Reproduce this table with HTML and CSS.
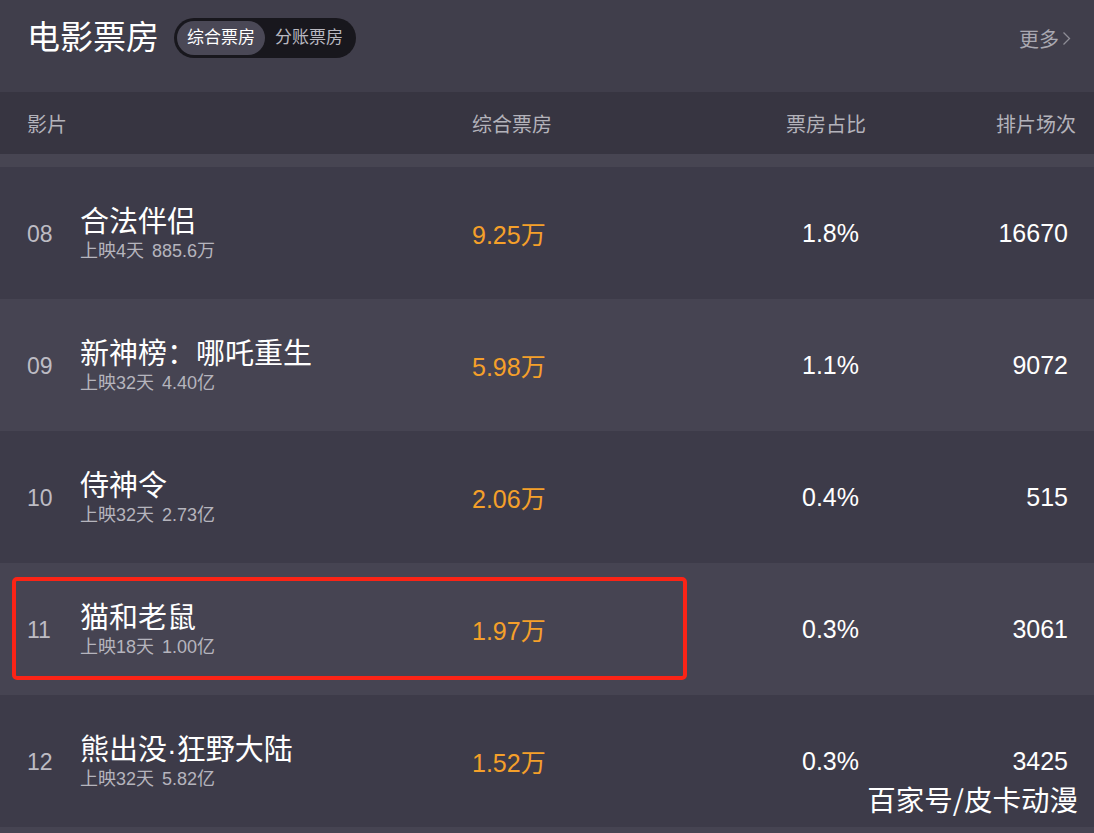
FILE: index.html
```html
<!DOCTYPE html>
<html lang="zh-CN">
<head>
<meta charset="utf-8">
<title>电影票房</title>
<link rel="stylesheet" href="styles.css">
</head>
<body>
<div class="page">
  <header class="top">
    <div class="top-left">
      <h1 class="title">电影票房</h1>
      <div class="toggle">
        <span class="tab active">综合票房</span>
        <span class="tab">分账票房</span>
      </div>
    </div>
    <a class="more">更多<svg class="chev" width="9" height="15" viewBox="0 0 9 15"><polyline points="1.5,1.5 7.5,7.5 1.5,13.5" fill="none" stroke="#8e8d96" stroke-width="1.3"/></svg></a>
  </header>

  <div class="thead">
    <div class="th">影片</div>
    <div class="th">综合票房</div>
    <div class="th right r1">票房占比</div>
    <div class="th right r2">排片场次</div>
  </div>

  <div class="tbody">
    <div class="row">
      <div class="rank">08</div>
      <div class="film"><div class="name">合法伴侣</div><div class="sub">上映4天<span class="total">885.6万</span></div></div>
      <div class="gross">9.25万</div>
      <div class="share">1.8%</div>
      <div class="count">16670</div>
    </div>
    <div class="row">
      <div class="rank">09</div>
      <div class="film"><div class="name">新神榜：哪吒重生</div><div class="sub">上映32天<span class="total">4.40亿</span></div></div>
      <div class="gross">5.98万</div>
      <div class="share">1.1%</div>
      <div class="count">9072</div>
    </div>
    <div class="row">
      <div class="rank">10</div>
      <div class="film"><div class="name">侍神令</div><div class="sub">上映32天<span class="total">2.73亿</span></div></div>
      <div class="gross">2.06万</div>
      <div class="share">0.4%</div>
      <div class="count">515</div>
    </div>
    <div class="row">
      <div class="rank">11</div>
      <div class="film"><div class="name">猫和老鼠</div><div class="sub">上映18天<span class="total">1.00亿</span></div></div>
      <div class="gross">1.97万</div>
      <div class="share">0.3%</div>
      <div class="count">3061</div>
      <div class="mark"></div>
    </div>
    <div class="row">
      <div class="rank">12</div>
      <div class="film"><div class="name">熊出没·狂野大陆</div><div class="sub">上映32天<span class="total">5.82亿</span></div></div>
      <div class="gross">1.52万</div>
      <div class="share">0.3%</div>
      <div class="count">3425</div>
    </div>
  </div>

  <div class="wm">百家号/皮卡动漫</div>
</div>
</body>
</html>
```

FILE: styles.css
```css
html, body {
  margin: 0;
  padding: 0;
}
body {
  background: #464452;
  font-family: "Liberation Sans", "Noto Sans CJK SC", sans-serif;
  color: #fff;
}
.page {
  width: 1094px;
  position: relative;
}

/* top bar */
.top {
  height: 92px;
  box-sizing: border-box;
  padding: 18px 23px 0 27px;
  display: flex;
  align-items: flex-start;
  background: #403e4b;
}
.top-left {
  display: flex;
  align-items: center;
  gap: 15px;
  height: 40px;
}
.title {
  margin: 0;
  font-size: 33px;
  line-height: 40px;
  font-weight: normal;
  color: #fff;
}
.toggle {
  display: flex;
  padding: 3px;
  background: #18171d;
  border-radius: 20px;
}
.tab {
  height: 34px;
  line-height: 34px;
  padding: 0 10px;
  font-size: 17px;
  color: #b9b8c0;
  border-radius: 17px;
}
.tab.active {
  background: #4a4856;
  color: #fff;
}
.more {
  margin-left: auto;
  display: flex;
  align-items: center;
  gap: 3px;
  height: 40px;
  font-size: 20px;
  color: #a9a8b1;
}
.chev {
  display: block;
}

/* table head */
.thead {
  height: 62px;
  box-sizing: border-box;
  padding: 0 18px 0 27px;
  display: grid;
  grid-template-columns: 445px 194px 200px 210px;
  align-items: center;
  background: #373541;
  font-size: 20px;
  color: #b3b2ba;
}
.th.right {
  text-align: right;
}

/* table body */
.tbody {
  padding-top: 13px;
  background: #474552;
}
.row {
  position: relative;
  height: 132px;
  box-sizing: border-box;
  padding: 0 18px 0 27px;
  display: grid;
  grid-template-columns: 53px 392px 194px 200px 210px;
  align-items: center;
  background: #3d3b49;
}
.row:nth-child(even) {
  background: #464452;
}
.rank {
  font-size: 23px;
  color: #bdbcc4;
  padding-top: 2px;
}
.name {
  font-size: 29px;
  line-height: 34px;
  color: #fff;
}
.sub {
  margin-top: 2px;
  font-size: 18px;
  line-height: 21px;
  color: #b5b4bd;
}
.total {
  margin-left: 8px;
}
.gross {
  font-size: 25px;
  color: #f5a02a;
}
.share,
.count {
  font-size: 25px;
  color: #fff;
  text-align: right;
}
.share {
  padding-right: 7px;
}
.count {
  padding-right: 8px;
}

/* annotation overlay */
.mark {
  position: absolute;
  left: 12px;
  top: 14px;
  width: 675px;
  height: 103px;
  box-sizing: border-box;
  border: 4px solid #fb2416;
  border-radius: 5px;
}
.wm {
  position: absolute;
  right: 16px;
  top: 781px;
  font-family: "Noto Sans CJK SC", sans-serif;
  font-size: 28.5px;
  line-height: 36px;
  color: #fff;
}
```
